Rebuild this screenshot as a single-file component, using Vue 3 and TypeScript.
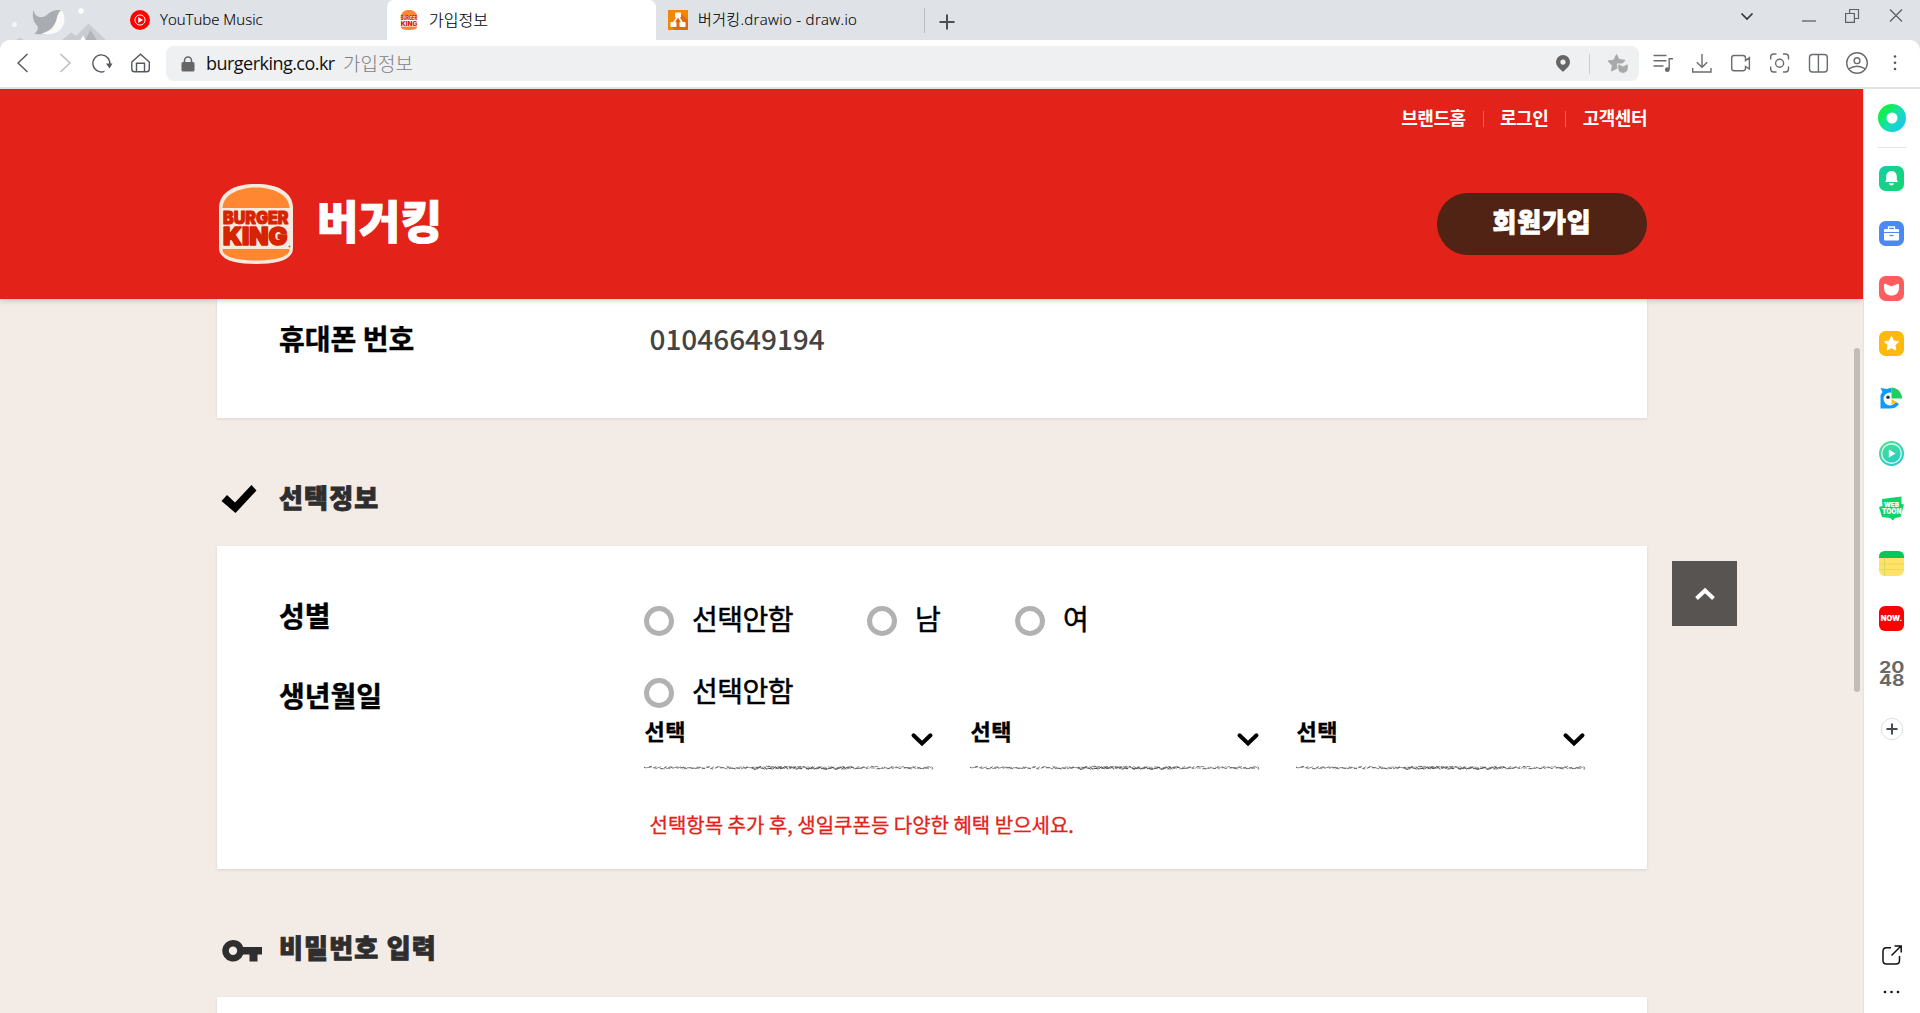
<script setup lang="ts">
interface SelectField {
  id: string
  label: string
}

const utilLinks: string[] = ['브랜드홈', '로그인', '고객센터']

const genders = [
  { id: 'none', label: '선택안함' },
  { id: 'male', label: '남' },
  { id: 'female', label: '여' },
]

const birthFields: SelectField[] = [
  { id: 'year', label: '선택' },
  { id: 'month', label: '선택' },
  { id: 'day', label: '선택' },
]

// Rough pencil stroke under each select, built from a fixed pseudo random sequence.
function roughStroke(width: number, seed: number, gap: number): string {
  let s = seed
  const rnd = () => {
    s = (s * 16807) % 2147483647
    return s / 2147483647
  }
  let d = ''
  let x = 0
  while (x < width - 1) {
    const len = 1.5 + rnd() * 3
    const y1 = 1.2 + rnd() * 3
    const y2 = 1.2 + rnd() * 3
    d += `M${x.toFixed(1)} ${y1.toFixed(1)}L${Math.min(width, x + len).toFixed(1)} ${y2.toFixed(1)}`
    x += len * 0.8 + rnd() * gap
  }
  return d
}

const strokeLight = roughStroke(289, 71, 1.6)
const strokeDark = roughStroke(289, 1234, 4)
const strokeMiddle = roughStroke(100, 991, 1.6)
</script>

<template>
  <div class="window">
    <div class="tabstrip">
      <svg class="art" width="106" height="40" viewBox="0 0 106 40">
        <path d="M62 40L71 32.500L76 36L88.500 23.500L106 40Z" fill="#c9ccd1" />
        <path d="M85 40L90.500 30L96.500 40Z" fill="#b0b4b9" />
        <path d="M80.500 40L83 35.500L85.500 40Z" fill="#fff" />
        <path d="M16 40L20 37.500L24 40Z" fill="#c9ccd1" />
        <circle cx="14.500" cy="24.500" r="2.500" fill="#f5f6f7" />
        <circle cx="81" cy="11" r="2.700" fill="#fff" />
        <path d="M33.500 10C35 18 42 18.500 46 15.500C51 11 55 9.500 61.500 10C59 14 58 19 55 25C51 33 41 36 34.500 33.500C37 32 38.500 29 37.500 26C34 23 31.500 17 33.500 10Z" fill="#a9adb2" />
        <path d="M61 10C66 15 65.500 24 60.500 29.500C55.500 35 47 35 41 33.500C50 32 54.500 26 56.500 19.500C57.500 15.500 58.500 12 61 10Z" fill="#fafafa" />
      </svg>
      <div class="tab tab-first">
        <svg width="20" height="20" viewBox="0 0 20 20">
          <circle cx="10" cy="10" r="10" fill="#f00" />
          <circle cx="10" cy="10" r="5.100" fill="none" stroke="#fff" stroke-width="1" />
          <path d="M8.200 7L13 10L8.200 13Z" fill="#fff" />
        </svg>
        <span class="tab-title yt">YouTube Music</span>
      </div>
      <div class="tab tab-active">
        <svg width="18" height="20" viewBox="0 0 74 80" preserveAspectRatio="none">
          <path d="M4 22C7 8 20 0 37 0S67 8 70 22Z" fill="#ff8732" />
          <path d="M3 66H71C70 76 60 80 37 80S4 76 3 66Z" fill="#ff8732" />
          <text x="3" y="42" textLength="68" lengthAdjust="spacingAndGlyphs" class="fav-text" font-size="22">BURGER</text>
          <text x="3" y="63" textLength="68" lengthAdjust="spacingAndGlyphs" class="fav-text" font-size="25">KING</text>
        </svg>
        <span class="tab-title kr">가입정보</span>
      </div>
      <div class="tab tab-draw">
        <svg width="20" height="20" viewBox="0 0 20 20">
          <rect width="20" height="20" fill="#f08705" />
          <path d="M12.500 3.500L20 10V20H7L3 16L9 8Z" fill="#df6c0c" />
          <path d="M10 6L5.500 13M10 6L14.500 13" stroke="#fff" stroke-width="1.500" />
          <rect x="7" y="2.500" width="6" height="5" rx=".7" fill="#fff" />
          <rect x="2.500" y="12" width="6" height="5" rx=".7" fill="#fff" />
          <rect x="11.500" y="12" width="6" height="5" rx=".7" fill="#fff" />
        </svg>
        <span class="tab-title draw">버거킹.drawio - draw.io</span>
      </div>
      <i class="tab-sep"></i>
      <svg class="new-tab" width="16" height="16" viewBox="0 0 16 16">
        <path d="M8 .5V15.500M.5 8H15.500" stroke="#4b4e52" stroke-width="2" />
      </svg>
      <svg class="win-controls" width="180" height="40" viewBox="1740 0 180 40" fill="none" stroke="#5d6166">
        <path d="M1741.500 13.500L1747 19L1752.500 13.500" stroke="#33363a" stroke-width="1.700" />
        <path d="M1802 21H1816" stroke-width="1.300" />
        <path d="M1845.600 13.500H1854.400V22.400H1845.600ZM1849.600 13.500V9.500H1858.500V18.500H1854.400" stroke-width="1.200" />
        <path d="M1890 9.500L1902 21.500M1902 9.500L1890 21.500" stroke-width="1.300" />
      </svg>
    </div>

    <div class="toolbar">
      <svg class="nav-icons" width="166" height="46" viewBox="0 40 166 46" fill="none" stroke="#55585d" stroke-width="1.400">
        <path d="M27.500 54L18 63L27.500 72" />
        <path d="M60.500 54L70 63L60.500 72" stroke="#b7babd" />
        <path d="M104.500 71.300A8.500 8.500 0 1 1 109.800 64.500" />
        <path d="M106 63.500H112.500L109.500 68.500Z" fill="#55585d" stroke="none" />
        <path d="M131.800 62L140.500 54.300L149.300 62V69Q149.300 71.800 146.500 71.800H134.500Q131.800 71.800 131.800 69ZM136.500 71.500V63.200H144.500V71.500" />
      </svg>
      <div class="address">
        <svg class="lock" width="14" height="16" viewBox="0 0 14 16">
          <path d="M3.500 7V4.500A3.500 3.500 0 0 1 10.500 4.500V7" fill="none" stroke="#666" stroke-width="1.600" />
          <rect x=".5" y="6" width="13" height="9.500" rx="1.500" fill="#666" />
        </svg>
        <span class="host">burgerking.co.kr</span>
        <span class="page-name">가입정보</span>
        <svg class="addr-icons" width="84" height="35" viewBox="1555 46 84 35">
          <path fill-rule="evenodd" d="M1563 55A7 7 0 0 1 1570 62C1570 66 1566 69 1563 72C1560 69 1556 66 1556 62A7 7 0 0 1 1563 55ZM1563 59.500A2.600 2.600 0 1 0 1563 64.700A2.600 2.600 0 1 0 1563 59.500Z" fill="#666" />
          <path d="M1589.500 54V74" stroke="#cbcdd0" />
          <path d="M1616.500 54.500L1619 59.500L1625 60.300L1622.500 63L1616.500 63L1617 69L1616.500 68.500L1611.500 71L1612.300 65.500L1608 61L1614 60Z" fill="#a9a9a9" stroke="#a9a9a9" stroke-linejoin="round" />
          <path d="M1618 64.500Q1618 64 1619 64.300L1623 66.300L1627 64.300Q1628 64 1628 65V68.500A5 4.700 0 0 1 1618 68.500Z" fill="#a9a9a9" stroke="#eff0f2" stroke-width=".5" />
        </svg>
      </div>
      <svg class="tool-icons" width="281" height="46" viewBox="1639 40 281 46" fill="none" stroke="#686b70" stroke-width="1.400">
        <path d="M1653.500 55.500H1666.500M1653.500 60.800H1666.500M1653.500 66H1663.500M1669.200 69V58.800H1673" />
        <circle cx="1667.300" cy="69.700" r="2.400" fill="#686b70" stroke="none" />
        <path d="M1702 54V67M1696.800 62.300L1702 67.300L1707.200 62.300M1692.700 68V72H1711V68" />
        <path d="M1734 55.500H1743Q1745.500 55.500 1745.500 58V60.500L1749.400 57.600V69L1745.500 66.500V68.300Q1745.500 70.700 1743 70.700H1734Q1731.700 70.700 1731.700 68.300V58Q1731.700 55.500 1734 55.500Z" />
        <path d="M1770.700 59.500V57Q1770.700 54 1773.700 54H1776.500M1783 54H1785.500Q1788.500 54 1788.500 57V59.500M1788.500 66.500V69Q1788.500 72 1785.500 72H1783M1776.500 72H1773.700Q1770.700 72 1770.700 69V66.500" />
        <circle cx="1779.600" cy="63.300" r="4" />
        <rect x="1809.500" y="54.500" width="17.800" height="17.500" rx="3" />
        <path d="M1818.400 54.500V72" />
        <circle cx="1857" cy="63" r="10.300" />
        <circle cx="1857" cy="60.700" r="2.900" />
        <path d="M1848.500 69Q1857 63.500 1865.500 69" />
        <g fill="#55585d" stroke="none"><circle cx="1895" cy="56.500" r="1.300" /><circle cx="1895" cy="62.700" r="1.300" /><circle cx="1895" cy="69" r="1.300" /></g>
      </svg>
    </div>

    <div class="viewport">
      <main class="page">
        <header class="site-header">
          <nav class="util">
            <a v-for="link in utilLinks" :key="link">{{ link }}</a>
          </nav>
          <div class="brand-row">
            <svg class="logo" width="74" height="80" viewBox="0 0 74 80">
              <path d="M0 23C1 8 15 0 37 0S73 8 74 23V64C74 76 58 80 37 80S0 76 0 64Z" fill="#f5ebdc" />
              <path d="M3.500 24C4 11 19 3.500 37 3.500S70 11 70.500 24Z" fill="#ff8732" />
              <path d="M3.500 65H70.500C71 73 56 76.500 37 76.500S3 73 3.500 65Z" fill="#ff8732" />
              <text x="4" y="39.700" textLength="65.500" lengthAdjust="spacingAndGlyphs" class="logo-text" font-size="17">BURGER</text>
              <text x="4" y="61.300" textLength="64.500" lengthAdjust="spacingAndGlyphs" class="logo-text big" font-size="25">KING</text>
              <circle cx="70.500" cy="62.500" r="1" fill="#d6552f" />
            </svg>
            <h1>버거킹</h1>
            <button class="join">회원가입</button>
          </div>
        </header>

        <section class="card card-phone">
          <div class="label">휴대폰 번호</div>
          <div class="phone">01046649194</div>
        </section>

        <h2 class="section-title">
          <svg width="36" height="30" viewBox="0 0 36 30">
            <path d="M0.500 17L6 11L14 18.500L30.500 1L35.500 6.500L14.500 29Z" fill="#000" />
          </svg>
          <span>선택정보</span>
        </h2>

        <section class="card card-optional">
          <div class="row gender">
            <div class="label">성별</div>
            <div class="radios">
              <label v-for="g in genders" :key="g.id" :class="['radio', g.id]"><i></i>{{ g.label }}</label>
            </div>
          </div>
          <div class="row birth">
            <div class="label">생년월일</div>
            <div class="birth-body">
              <label class="radio"><i></i>선택안함</label>
              <div class="selects">
                <div v-for="f in birthFields" :key="f.id" class="select">
                  <span>{{ f.label }}</span>
                  <svg class="caret" width="22" height="14" viewBox="0 0 22 14">
                    <path d="M2.500 2.300L11 10.500L19.500 2.300" fill="none" stroke="#000" stroke-width="4" stroke-linecap="round" />
                  </svg>
                  <svg class="rough" width="289" height="6" viewBox="0 0 289 6" fill="none">
                    <path :d="strokeLight" stroke="#8c8c8c" stroke-width="1" />
                    <path :d="strokeDark" stroke="#5c5c5c" stroke-width=".9" />
                    <path :d="strokeMiddle" stroke="#444" stroke-width=".9" transform="translate(108 .3)" />
                  </svg>
                </div>
              </div>
              <p class="note">선택항목 추가 후, 생일쿠폰등 다양한 혜택 받으세요.</p>
            </div>
          </div>
        </section>

        <h2 class="section-title password">
          <svg width="41" height="24" viewBox="0 0 41 24">
            <path fill-rule="evenodd" d="M11 1A10.800 10.800 0 0 1 21.200 8H40V15.500H35.500V22.500H27.500V15.500H21.200A10.800 10.800 0 1 1 11 1ZM11 7.500A4.200 4.200 0 1 0 11 15.900A4.200 4.200 0 1 0 11 7.500Z" fill="#2e2e2e" />
          </svg>
          <span>비밀번호 입력</span>
        </h2>
        <section class="card card-password"></section>

        <button class="to-top">
          <svg width="24" height="16" viewBox="0 0 24 16"><path d="M3.500 12.500L12 4.500L20.500 12.500" fill="none" stroke="#fff" stroke-width="4" /></svg>
        </button>
        <i class="scroll-thumb"></i>
      </main>

      <aside class="side">
        <div class="side-top">
          <svg width="28" height="28" viewBox="0 0 28 28">
            <defs>
              <linearGradient id="ring" x1=".1" y1=".2" x2=".9" y2=".85"><stop offset=".1" stop-color="#12ee4b" /><stop offset=".55" stop-color="#14dfb4" /><stop offset="1" stop-color="#20c4f4" /></linearGradient>
            </defs>
            <circle cx="14" cy="14" r="14" fill="url(#ring)" /><circle cx="14" cy="14" r="5.500" fill="#fff" />
          </svg>
        </div>
        <div class="side-item">
          <svg width="25" height="25" viewBox="0 0 25 25">
            <defs><linearGradient id="bell" x1="0" y1="0" x2="1" y2="1"><stop offset="0" stop-color="#0fd0a8" /><stop offset="1" stop-color="#16d56d" /></linearGradient></defs>
            <rect width="25" height="25" rx="6.500" fill="url(#bell)" />
            <path d="M12.500 5C16 5 17.800 7.500 17.800 10.500V13.500L18.800 16H6.200L7.200 13.500V10.500C7.200 7.500 9 5 12.500 5ZM10 17.300H15Q14.500 19.500 12.500 19.500T10 17.300Z" fill="#fff" />
          </svg>
        </div>
        <div class="side-item">
          <svg width="25" height="25" viewBox="0 0 25 25">
            <rect width="25" height="25" rx="6.500" fill="#4d88f7" />
            <path d="M9.500 8.500V6H15.500V8.500" fill="none" stroke="#fff" stroke-width="1.300" />
            <path d="M6 8H19Q20 8 20 9V11H5V9Q5 8 6 8ZM5 12H20V18.500Q20 19.500 19 19.500H6Q5 19.500 5 18.500Z" fill="#fff" />
            <path d="M10.500 14.500H14.500" stroke="#4d88f7" stroke-width="1.200" />
          </svg>
        </div>
        <div class="side-item">
          <svg width="25" height="25" viewBox="0 0 25 25">
            <rect width="25" height="25" rx="6.500" fill="#ff5d5d" />
            <path d="M5 9Q5 7 7 8C9 9 10.500 9.500 12.500 10.500C14.500 9.500 16 9 18 8Q20 7 20 9V12C20 17 16.500 19.500 12.500 19.500S5 17 5 12Z" fill="#fff" />
          </svg>
        </div>
        <div class="side-item">
          <svg width="25" height="25" viewBox="0 0 25 25">
            <rect width="25" height="25" rx="6.500" fill="#ffb90d" />
            <path d="M12.500 5.500L14.600 10L19.500 10.700L16 14.200L16.800 19L12.500 16.700L8.200 19L9 14.200L5.500 10.700L10.400 10Z" fill="#fff" stroke="#fff" stroke-linejoin="round" />
          </svg>
        </div>
        <div class="side-item">
          <svg width="25" height="25" viewBox="0 0 25 25">
            <path d="M1.500 2L8 3Q10 2 12.500 2V13L20 18Q17 22.500 11 22.500H1.500V9L3.500 6Z" fill="#0b9bfa" />
            <circle cx="11" cy="13" r="6.500" fill="#fff" />
            <path d="M12.500 1.500C18.500 1.500 23 6.500 23 12.500H12.500Z" fill="#1fce5f" />
            <path d="M12.500 13L18 16L12.500 19Z" fill="#fdc60b" />
            <circle cx="9" cy="11.200" r="1.800" fill="#38344a" />
          </svg>
        </div>
        <div class="side-item">
          <svg width="25" height="25" viewBox="0 0 25 25">
            <defs><linearGradient id="play" x1="0" y1="0" x2=".5" y2="1"><stop offset="0" stop-color="#4fe38b" /><stop offset="1" stop-color="#27cbc8" /></linearGradient></defs>
            <circle cx="12.500" cy="12.500" r="12.500" fill="url(#play)" />
            <circle cx="12.500" cy="12.500" r="9.800" fill="none" stroke="#d5faec" stroke-width="1.400" />
            <path d="M9.800 8.500L16.500 12.500L9.800 16.500Z" fill="#fff" />
          </svg>
        </div>
        <div class="side-item">
          <svg width="25" height="25" viewBox="0 0 25 25">
            <path d="M3 3L22.500 .5V8L25 8.500L21.500 21L16 22L14 24.500L11 22L3 21L0 11L3.500 10Z" fill="#07d66b" />
            <text x="5" y="11.300" textLength="15" lengthAdjust="spacingAndGlyphs" class="mini" font-size="6.500">WEB</text>
            <text x="3" y="17.500" textLength="19.500" lengthAdjust="spacingAndGlyphs" class="mini" font-size="7">TOON</text>
          </svg>
        </div>
        <div class="side-item">
          <svg width="25" height="25" viewBox="0 0 25 25">
            <rect width="25" height="25" rx="6" fill="#ffe26a" />
            <path d="M0 7V6Q0 0 6 0H19Q25 0 25 6V7Z" fill="#07c755" />
            <path d="M0 13H25M0 18.500H25" stroke="#f5d651" /><path d="M5.500 7V25" stroke="#d5db58" />
          </svg>
        </div>
        <div class="side-item">
          <svg width="25" height="25" viewBox="0 0 25 25">
            <rect width="25" height="25" rx="6" fill="#f00" />
            <text x="1.800" y="15" textLength="21.500" lengthAdjust="spacingAndGlyphs" class="mini" font-size="7">NOW.</text>
          </svg>
        </div>
        <div class="side-item">
          <svg width="26" height="26" viewBox="0 0 26 26">
            <text x="0" y="12" textLength="25.500" lengthAdjust="spacingAndGlyphs" class="g2048" font-size="16">20</text>
            <text x="0" y="25" textLength="25.500" lengthAdjust="spacingAndGlyphs" class="g2048" font-size="16">48</text>
          </svg>
        </div>
        <div class="side-item">
          <svg width="24" height="24" viewBox="0 0 24 24">
            <circle cx="12" cy="12" r="10.700" fill="#fff" stroke="#dcdee0" />
            <path d="M12 6.500V17.500M6.500 12H17.500" stroke="#454b52" stroke-width="2" />
          </svg>
        </div>
        <div class="side-bottom">
          <svg width="20" height="20" viewBox="0 0 20 20" fill="none" stroke="#111" stroke-width="1.500">
            <path d="M9 2.700H4.500Q1 2.700 1 6.200V15.500Q1 19 4.500 19H14Q17.500 19 17.500 15.500V11M12.500 1H19.200V7.500M19 1L9.500 10.500" />
          </svg>
          <svg width="18" height="4" viewBox="0 0 18 4" fill="#111"><circle cx="2" cy="2" r="1.300" /><circle cx="8.500" cy="2" r="1.300" /><circle cx="15" cy="2" r="1.300" /></svg>
        </div>
      </aside>
    </div>
  </div>
</template>

<style>
body {
  margin: 0;
  overflow: hidden;
}
</style>

<style scoped>
* {
  box-sizing: border-box;
}
svg {
  display: block;
  flex: none;
  overflow: visible;
}
.window {
  width: 1920px;
  height: 1013px;
  overflow: hidden;
  display: flex;
  flex-direction: column;
  background: #dfe2e6;
  font-family: 'Noto Sans CJK KR', 'Noto Sans', sans-serif;
}
.tabstrip {
  height: 40px;
  flex: none;
  display: flex;
  align-items: center;
}
.tab {
  height: 40px;
  display: flex;
  align-items: center;
  flex: none;
}
.tab-first {
  width: 281px;
  padding-left: 24px;
}
.tab-active {
  width: 269px;
  padding-left: 13px;
  background: #fff;
  border-radius: 7px 7px 0 0;
}
.tab-draw {
  width: 268px;
  padding-left: 12px;
}
.tab-title {
  font-size: 15px;
  line-height: 20px;
  font-weight: 300;
  color: #000;
  white-space: nowrap;
  margin-left: 10px;
  padding-bottom: 2px;
  -webkit-text-stroke: 0.15px #000;
}
.yt {
  font-family: 'Open Sans', sans-serif;
  letter-spacing: 0;
}
.draw {
  font-family: 'Open Sans', 'Noto Sans CJK KR', sans-serif;
  letter-spacing: 0.33px;
}
.kr {
  font-size: 16px;
  margin-left: 11px;
  padding-bottom: 3px;
}
.tab-sep {
  width: 1px;
  height: 25px;
  background: #b8bbbf;
}
.new-tab {
  margin: 3px 0 0 14px;
}
.win-controls {
  margin-left: auto;
}
.toolbar {
  height: 47px;
  flex: none;
  display: flex;
  background: #fff;
  border-radius: 10px 10px 0 0;
}
.address {
  width: 1473px;
  height: 35px;
  margin-top: 6px;
  border-radius: 8px;
  background: #eff0f2;
  display: flex;
  align-items: center;
  padding-left: 15px;
}
.host {
  width: 129px;
  font: 18px/24px 'Open Sans', sans-serif;
  letter-spacing: -0.53px;
  color: #111;
  margin-left: 11px;
  padding-bottom: 1px;
  white-space: nowrap;
}
.page-name {
  font-size: 19px;
  line-height: 24px;
  font-weight: 300;
  color: #7d7e7f;
  margin-left: 8px;
  padding-bottom: 2px;
}
.addr-icons {
  margin-left: auto;
}
.viewport {
  flex: 1;
  display: flex;
  min-height: 0;
  padding-top: 2px;
}
.page {
  position: relative;
  width: 1863px;
  height: 924px;
  overflow: hidden;
  background: #f3ebe6;
}
.site-header {
  position: relative;
  z-index: 1;
  height: 210px;
  background: #e32219;
  box-shadow: 0 1px 6px rgba(0, 0, 0, 0.22);
  padding: 0 216px 0 219px;
}
.util {
  height: 95px;
  padding-top: 16px;
  display: flex;
  justify-content: flex-end;
}
.util a {
  height: 24px;
  font-size: 18px;
  font-weight: 700;
  line-height: 24px;
  letter-spacing: -0.5px;
  color: #fff;
  display: flex;
  align-items: center;
}
.util a + a::before {
  content: '';
  width: 1px;
  height: 16px;
  background: #ee675f;
  margin: 4px 16.5px 0 17px;
}
.brand-row {
  display: flex;
  align-items: flex-start;
}
.logo-text,
.fav-text,
.mini,
.g2048 {
  font-family: 'Inter', 'Roboto', sans-serif;
  font-weight: 900;
}
.logo-text {
  fill: #d62300;
  stroke: #d62300;
  stroke-width: 1px;
  stroke-linejoin: round;
}
.big {
  stroke-width: 1.6px;
}
.fav-text {
  fill: #d62300;
}
.mini {
  fill: #fff;
}
.g2048 {
  fill: #696969;
  font-weight: 700;
}
h1 {
  margin: 4px 0 0 24px;
  font-size: 45px;
  line-height: 64px;
  font-weight: 900;
  letter-spacing: 0.5px;
  color: #fff;
  -webkit-text-stroke: 1px #fff;
}
.join {
  width: 210px;
  height: 62px;
  margin: 9px 0 0 auto;
  border: 0;
  border-radius: 31px;
  padding: 0 0 6px;
  background: #502314;
  color: #fff;
  font: 900 26px/56px 'Noto Sans CJK KR', sans-serif;
  letter-spacing: 0.8px;
  -webkit-text-stroke: 0.8px #fff;
}
.card {
  width: 1430px;
  margin-left: 217px;
  background: #fff;
  box-shadow: 0 1px 3px rgba(0, 0, 0, 0.1);
}
.card-phone {
  height: 119px;
  padding: 19px 0 0 62px;
  display: flex;
}
.label {
  width: 370px;
  flex: none;
  font-size: 28px;
  line-height: 40px;
  font-weight: 700;
  color: #000;
  -webkit-text-stroke: 0.4px #000;
}
.phone {
  font-size: 28px;
  line-height: 40px;
  font-weight: 500;
  letter-spacing: -0.03px;
  color: #444;
  padding-left: 0.5px;
}
.section-title {
  height: 128px;
  margin: 0;
  padding: 0 0 0 221px;
  display: flex;
  align-items: flex-start;
  font-weight: 900;
  color: #2e2e2e;
}
.section-title svg {
  margin-top: 66px;
}
.section-title span {
  margin: 59px 0 0 22px;
  font-size: 26px;
  line-height: 40px;
  letter-spacing: 1.2px;
  -webkit-text-stroke: 0.9px #2e2e2e;
}
.section-title.password svg {
  margin: 70px 0 0 0.5px;
}
.section-title.password span {
  margin: 58px 0 0 16.5px;
}
.card-optional {
  height: 323px;
  padding: 48px 0 0 62px;
}
.row {
  display: flex;
}
.gender {
  height: 81px;
}
.gender .label {
  padding-top: 1px;
}
.radios {
  display: flex;
  margin: 6px 0 0 -5px;
}
.radio {
  display: flex;
  align-items: center;
  height: 40px;
  font-size: 28px;
  line-height: 40px;
  letter-spacing: -0.5px;
  padding-bottom: 5px;
  color: #000;
  -webkit-text-stroke: 0.5px #000;
}
.radio i {
  width: 30px;
  height: 30px;
  margin: 6px 18px 0 0;
  border: 5px solid #b2b2b2;
  border-radius: 50%;
}
.radio.none {
  width: 223px;
}
.radio.male {
  width: 148px;
}
.birth-body {
  margin: -3px 0 0 -5px;
}
.selects {
  display: flex;
  gap: 37px;
  margin-top: 2px;
}
.select {
  width: 289px;
  height: 59px;
  display: flex;
  flex-wrap: wrap;
  align-content: flex-start;
  justify-content: space-between;
}
.select span {
  height: 33px;
  font-size: 22px;
  line-height: 32px;
  font-weight: 700;
  letter-spacing: 0.6px;
  padding-left: 0.5px;
  -webkit-text-stroke: 0.4px #000;
}
.caret {
  margin-top: 19px;
}
.rough {
  margin-top: 18px;
}
.note {
  margin: 37px 0 0 5.5px;
  font-size: 20px;
  line-height: 30px;
  color: #e32219;
  -webkit-text-stroke: 0.3px #e32219;
}
.card-password {
  height: 100px;
}
.to-top {
  position: absolute;
  left: 1672px;
  top: 472px;
  width: 65px;
  height: 65px;
  border: 0;
  padding: 0;
  display: flex;
  align-items: center;
  justify-content: center;
  background: #575452;
}
.scroll-thumb {
  position: absolute;
  left: 1854px;
  top: 259px;
  width: 6px;
  height: 344px;
  border-radius: 3px;
  background: #c1bcb8;
}
.side {
  width: 57px;
  border-left: 1px solid #dfe2e6;
  background: #fff;
  display: flex;
  flex-direction: column;
  align-items: center;
  padding-right: 1px;
}
.side-top {
  width: 30px;
  height: 59px;
  padding: 15px 0 0 1px;
  border-bottom: 1px solid #e2e4e6;
  margin-bottom: 3px;
}
.side-item {
  height: 55px;
  flex: none;
  display: flex;
  align-items: center;
}
.side-bottom {
  margin-top: auto;
  height: 68px;
  display: flex;
  flex-direction: column;
  align-items: center;
  gap: 25px;
}
</style>
